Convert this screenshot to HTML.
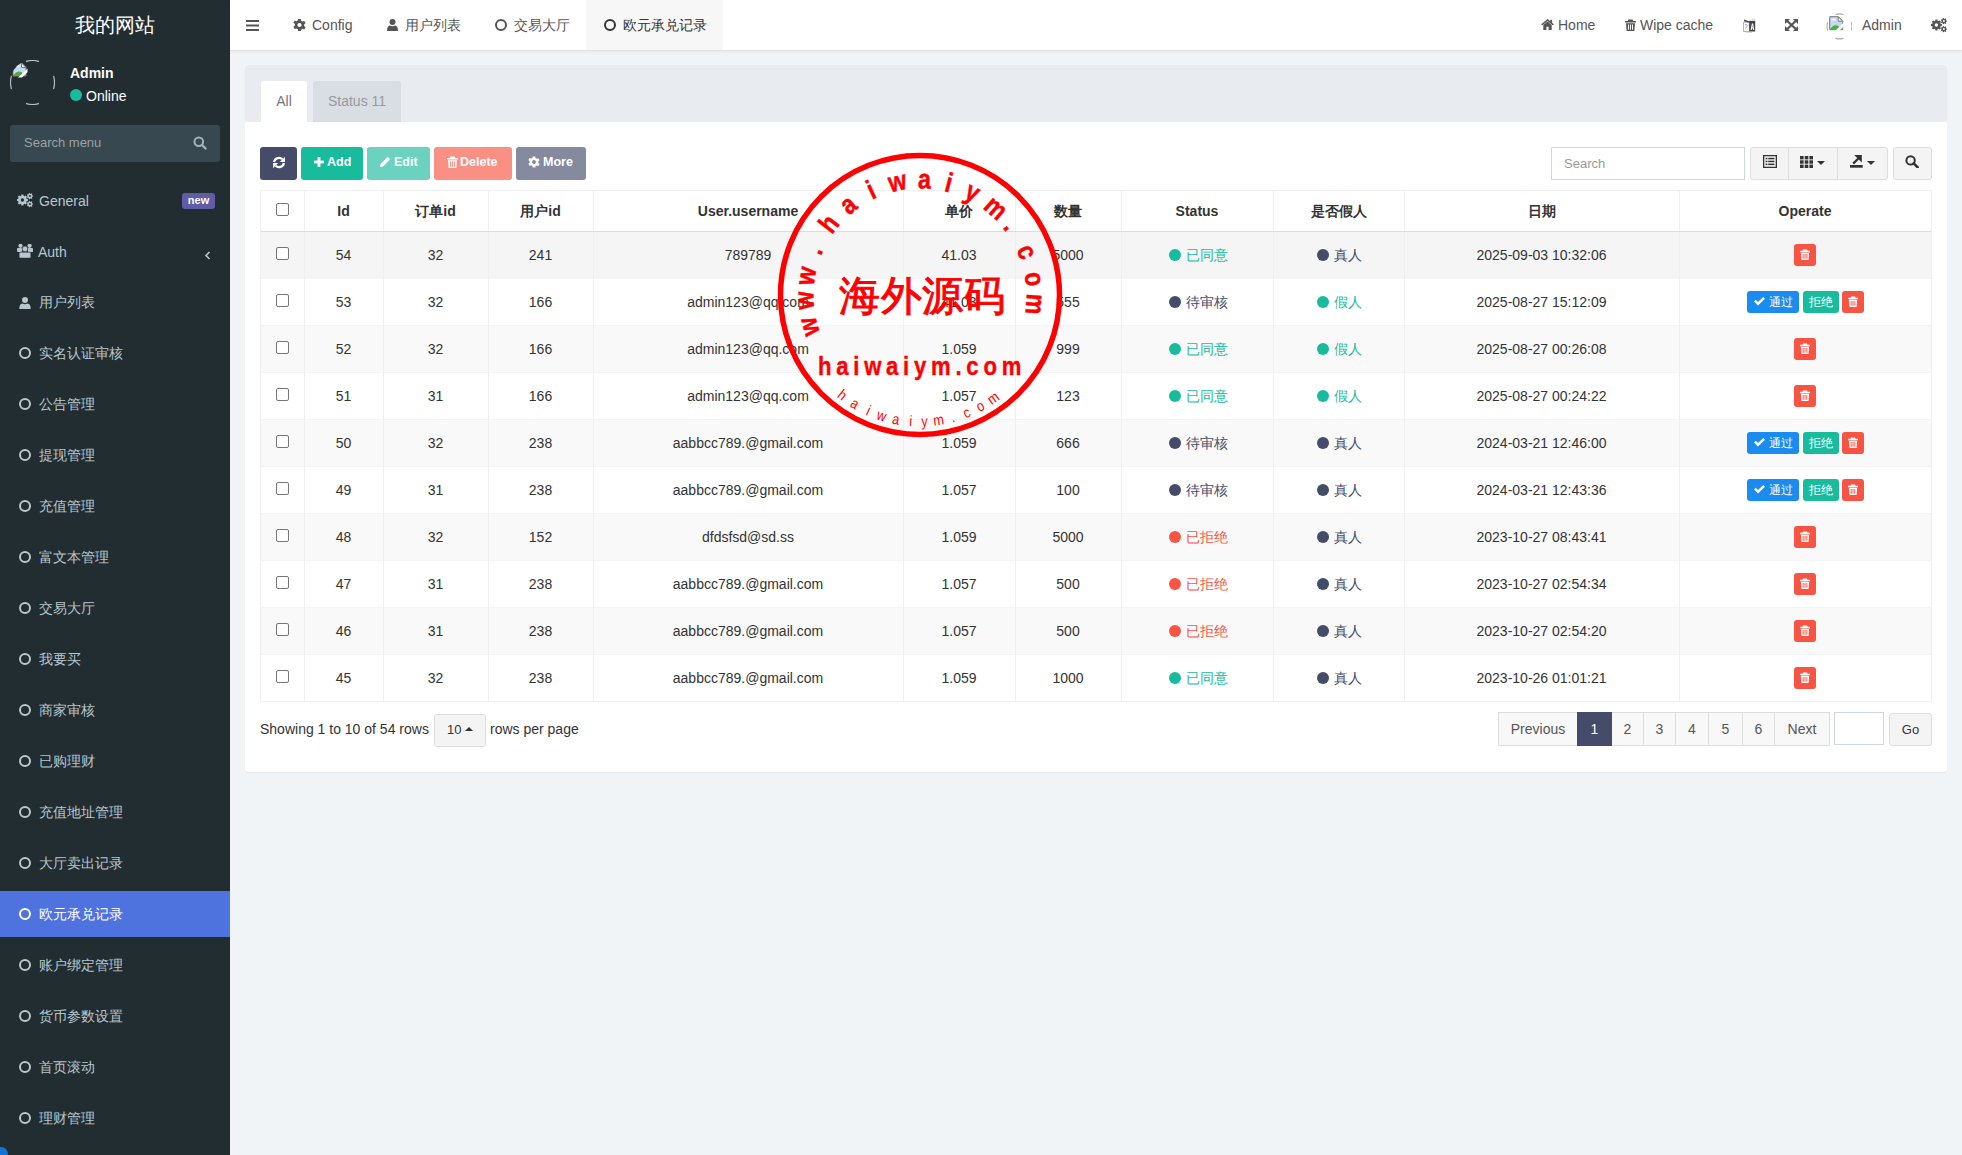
<!DOCTYPE html><html><head><meta charset="utf-8"><style>
*{box-sizing:border-box;margin:0;padding:0}
html,body{width:1962px;height:1155px;overflow:hidden}
body{font-family:"Liberation Sans",sans-serif;font-size:13px;color:#333;background:#f1f4f6;position:relative}
.a{position:absolute}
svg{display:block;position:absolute}
#sb{position:absolute;left:0;top:0;width:230px;height:1155px;background:#222d32}
#logo{position:absolute;left:0;top:0;width:230px;height:50px;line-height:50px;text-align:center;color:#fff;font-size:20px}
.mi{position:absolute;left:0;width:230px;height:46px;color:#b8c7ce;font-size:14px}
.mi .t{position:absolute;left:39px;top:15px;line-height:17px;white-space:nowrap}
.mi.act{background:#4e73df;color:#fff}
.ci{position:absolute;width:12px;height:12px;border:2px solid currentColor;border-radius:50%}
#hd{position:absolute;left:230px;top:0;width:1732px;height:51px;background:#fff;border-bottom:1px solid #dde1e4;box-shadow:0 1px 3px rgba(0,0,0,.05)}
.nt{position:absolute;top:0;height:50px;line-height:50px;font-size:14px;color:#555;white-space:nowrap}
#box{position:absolute;left:245px;top:65px;width:1702px;height:707px;background:#fff;border-radius:3px;box-shadow:0 1px 1px rgba(0,0,0,.05)}
#tabs{position:absolute;left:0;top:0;width:1702px;height:57px;background:#e8ecf0;border-radius:3px 3px 0 0}
.tab{position:absolute;top:16px;height:41px;line-height:41px;font-size:14px;text-align:center;border-radius:3px 3px 0 0}
.btn{position:absolute;top:82px;height:33px;border-radius:3px;color:#fff;font-size:14px;font-weight:bold;line-height:33px;white-space:nowrap}
table{position:absolute;border-collapse:collapse;table-layout:fixed;font-size:13px}
td,th{border:1px solid #ebeef0;text-align:center;vertical-align:middle;white-space:nowrap;overflow:hidden}
th{height:41px;font-weight:bold;color:#333;border-bottom:2px solid #ddd}
td{height:47px;color:#333}
tr.odd td{background:#f5f5f5}
.dot{display:inline-block;width:12px;height:12px;border-radius:50%;vertical-align:-1px;margin-right:5px}
.ob{display:inline-block;height:22px;line-height:22px;border-radius:3px;color:#fff;font-size:12px;vertical-align:middle}
.pgi{height:34px;line-height:32px;border:1px solid #ddd;background:#f8f8f8;color:#555;font-size:14px;text-align:center}
.cb{position:absolute;width:13px;height:13px;border:1px solid #767676;border-radius:2px;background:#fff}
.th{font-weight:bold;text-align:center;line-height:17px;font-size:14px;color:#333;white-space:nowrap}
.td{text-align:center;line-height:17px;font-size:14px;color:#333;white-space:nowrap}
</style></head><body><div id="sb"><div id="logo">我的网站</div><svg style="left:10px;top:60px" width="45" height="45" viewBox="0 0 45 45"><defs><clipPath id="cav"><circle cx="22.5" cy="22.5" r="22.5"/></clipPath></defs><g clip-path="url(#cav)"><g transform="translate(1.5,1.5)"><path d="M1.5 1.5 H10 L14.5 6 V14.5 H1.5 Z" fill="#c6d8f6" stroke="#777" stroke-width="1"/><path d="M3 5 Q3.5 3.3 5 3.6 Q6 2.6 7 3.6 Q8 3.8 8 5 Z" fill="#fff"/><path d="M10 1.5 V6 H14.5 Z" fill="#fff" stroke="#777" stroke-width="1" stroke-linejoin="round"/><path d="M1.5 14.5 Q5 8.5 10 10.5 L12 14.5 Z" fill="#4caf37"/><path d="M11 14.5 Q13 12 14.5 14 L14.5 14.5 Z" fill="#4caf37"/><path d="M6.5 16 L16 7 L16 10.8 L10.5 16 Z" fill="#fff"/></g></g><path d="M16.44 1.35 A22.00 22.00 0 0 1 28.56 1.35" stroke="#b5bcc0" stroke-width="1.2" fill="none" stroke-linecap="round"/><path d="M28.56 43.65 A22.00 22.00 0 0 1 16.44 43.65" stroke="#b5bcc0" stroke-width="1.2" fill="none" stroke-linecap="round"/><path d="M1.35 28.56 A22.00 22.00 0 0 1 1.35 16.44" stroke="#b5bcc0" stroke-width="1.2" fill="none" stroke-linecap="round"/><path d="M43.65 16.44 A22.00 22.00 0 0 1 43.65 28.56" stroke="#b5bcc0" stroke-width="1.2" fill="none" stroke-linecap="round"/></svg><div class="a" style="left:70px;top:65px;font-size:14px;font-weight:bold;color:#fff;line-height:17px">Admin</div><div class="a" style="left:70px;top:89px;width:12px;height:12px;border-radius:50%;background:#18bc9c"></div><div class="a" style="left:86px;top:88px;font-size:14px;color:#fff;line-height:17px">Online</div><div class="a" style="left:10px;top:125px;width:210px;height:37px;background:#374850;border-radius:3px"></div><div class="a" style="left:24px;top:135px;font-size:13px;color:#9aa3a8;line-height:16px">Search menu</div><svg style="left:193px;top:136px" width="14" height="14" viewBox="0 0 14 14"><circle cx="5.8" cy="5.8" r="4.3" stroke="#a9b1b5" stroke-width="2" fill="none"/><path d="M9 9 L12.5 12.5" stroke="#a9b1b5" stroke-width="2.4" stroke-linecap="round"/></svg><div class="mi" style="top:177px"><svg style="left:17px;top:16px" width="16" height="15" viewBox="0 0 16 15"><g fill="currentColor"><path fill-rule="evenodd" d="M9.54 5.85 L10.91 6.02 L10.91 7.98 L9.54 8.15 L9.14 9.12 L9.99 10.20 L8.60 11.59 L7.52 10.74 L6.55 11.14 L6.38 12.51 L4.42 12.51 L4.25 11.14 L3.28 10.74 L2.20 11.59 L0.81 10.20 L1.66 9.12 L1.26 8.15 L-0.11 7.98 L-0.11 6.02 L1.26 5.85 L1.66 4.88 L0.81 3.80 L2.20 2.41 L3.28 3.26 L4.25 2.86 L4.42 1.49 L6.38 1.49 L6.55 2.86 L7.52 3.26 L8.60 2.41 L9.99 3.80 L9.14 4.88 Z M3.70 7.00 a1.70 1.70 0 1 0 3.40 0 a1.70 1.70 0 1 0 -3.40 0 Z"/><path fill-rule="evenodd" d="M15.09 2.40 L16.03 2.46 L16.03 3.74 L15.09 3.80 L14.81 4.38 L15.36 5.15 L14.35 5.95 L13.72 5.25 L13.10 5.39 L12.83 6.30 L11.58 6.01 L11.73 5.08 L11.23 4.68 L10.35 5.04 L9.80 3.88 L10.62 3.42 L10.62 2.78 L9.80 2.32 L10.35 1.16 L11.23 1.52 L11.73 1.12 L11.58 0.19 L12.83 -0.10 L13.10 0.81 L13.72 0.95 L14.35 0.25 L15.36 1.05 L14.81 1.82 Z M11.90 3.10 a1.00 1.00 0 1 0 2.00 0 a1.00 1.00 0 1 0 -2.00 0 Z"/><path fill-rule="evenodd" d="M15.09 10.40 L16.03 10.46 L16.03 11.74 L15.09 11.80 L14.81 12.38 L15.36 13.15 L14.35 13.95 L13.72 13.25 L13.10 13.39 L12.83 14.30 L11.58 14.01 L11.73 13.08 L11.23 12.68 L10.35 13.04 L9.80 11.88 L10.62 11.42 L10.62 10.78 L9.80 10.32 L10.35 9.16 L11.23 9.52 L11.73 9.12 L11.58 8.19 L12.83 7.90 L13.10 8.81 L13.72 8.95 L14.35 8.25 L15.36 9.05 L14.81 9.82 Z M11.90 11.10 a1.00 1.00 0 1 0 2.00 0 a1.00 1.00 0 1 0 -2.00 0 Z"/></g></svg><div class="a" style="left:182px;top:16px;width:33px;height:16px;border-radius:3px;background:#605ca8;color:#fff;font-size:11px;font-weight:bold;line-height:14.5px;text-align:center">new</div><div class="t" style="left:39px;top:16px">General</div></div><div class="mi" style="top:228px"><svg style="left:17px;top:66px" width="16" height="15" viewBox="0 0 16 15" fill="currentColor" transform="translate(0,0)"></svg><svg style="left:17px;top:16px" width="16" height="15" viewBox="0 0 16 15" fill="currentColor"><circle cx="3.5" cy="1.8" r="2.1"/><circle cx="12.6" cy="1.8" r="2.1"/><rect x="0" y="4.1" width="5.2" height="4" rx="1"/><rect x="10.9" y="4.1" width="5.2" height="4" rx="1"/><circle cx="8" cy="4.9" r="2.8" stroke="#222d32" stroke-width=".6"/><rect x="2.2" y="8.2" width="11.6" height="5.9" rx="1.2" stroke="#222d32" stroke-width=".5"/></svg><div class="t" style="left:38px;top:16px">Auth</div><svg style="left:204px;top:23px" width="7" height="9" viewBox="0 0 7 9"><path d="M5.5 1 L2 4.5 L5.5 8" stroke="currentColor" stroke-width="1.6" fill="none"/></svg></div><div class="mi" style="top:279px"><svg style="left:19px;top:119px" width="12" height="12"></svg><svg style="left:19px;top:18px" width="12" height="12" viewBox="0 0 12 12" fill="currentColor"><circle cx="6" cy="3" r="3"/><path d="M0.3 12 Q0.3 6.6 3.3 6.4 Q6 8 8.7 6.4 Q11.7 6.6 11.7 12 Z"/></svg><div class="t">用户列表</div></div><div class="mi" style="top:330px"><div class="ci" style="left:19px;top:17px"></div><div class="t">实名认证审核</div></div><div class="mi" style="top:381px"><div class="ci" style="left:19px;top:17px"></div><div class="t">公告管理</div></div><div class="mi" style="top:432px"><div class="ci" style="left:19px;top:17px"></div><div class="t">提现管理</div></div><div class="mi" style="top:483px"><div class="ci" style="left:19px;top:17px"></div><div class="t">充值管理</div></div><div class="mi" style="top:534px"><div class="ci" style="left:19px;top:17px"></div><div class="t">富文本管理</div></div><div class="mi" style="top:585px"><div class="ci" style="left:19px;top:17px"></div><div class="t">交易大厅</div></div><div class="mi" style="top:636px"><div class="ci" style="left:19px;top:17px"></div><div class="t">我要买</div></div><div class="mi" style="top:687px"><div class="ci" style="left:19px;top:17px"></div><div class="t">商家审核</div></div><div class="mi" style="top:738px"><div class="ci" style="left:19px;top:17px"></div><div class="t">已购理财</div></div><div class="mi" style="top:789px"><div class="ci" style="left:19px;top:17px"></div><div class="t">充值地址管理</div></div><div class="mi" style="top:840px"><div class="ci" style="left:19px;top:17px"></div><div class="t">大厅卖出记录</div></div><div class="mi act" style="top:891px"><div class="ci" style="left:19px;top:17px"></div><div class="t">欧元承兑记录</div></div><div class="mi" style="top:942px"><div class="ci" style="left:19px;top:17px"></div><div class="t">账户绑定管理</div></div><div class="mi" style="top:993px"><div class="ci" style="left:19px;top:17px"></div><div class="t">货币参数设置</div></div><div class="mi" style="top:1044px"><div class="ci" style="left:19px;top:17px"></div><div class="t">首页滚动</div></div><div class="mi" style="top:1095px"><div class="ci" style="left:19px;top:17px"></div><div class="t">理财管理</div></div></div><div id="hd"><svg style="left:16px;top:20px" width="13" height="11" viewBox="0 0 13 11" fill="#555"><rect y="0" width="13" height="2"/><rect y="4.5" width="13" height="2"/><rect y="9" width="13" height="2"/></svg><svg style="left:63px;top:19px" width="13" height="12" viewBox="0 0 13 12" fill="#555"><path fill-rule="evenodd" d="M5.2 0h2.6l.4 1.9c.5.2.9.4 1.3.7l1.8-.7 1.3 2.2-1.5 1.3c.1.5.1 1 0 1.5l1.5 1.3-1.3 2.2-1.8-.7c-.4.3-.8.5-1.3.7L7.8 12H5.2l-.4-1.9c-.5-.2-.9-.4-1.3-.7l-1.8.7L.4 7.9 1.9 6.6c-.1-.5-.1-1 0-1.5L.4 3.8 1.7 1.6l1.8.7c.4-.3.8-.5 1.3-.7z M6.5 3.9a2.1 2.1 0 1 0 .01 0z"/></svg><div class="nt" style="left:82px">Config</div><svg style="left:157px;top:19px" width="11" height="12" viewBox="0 0 11 12" fill="#555"><circle cx="5.5" cy="3" r="3"/><path d="M0 12 Q0 6.6 2.8 6.4 Q5.5 8 8.2 6.4 Q11 6.6 11 12 Z"/></svg><div class="nt" style="left:175px">用户列表</div><div class="ci" style="left:265px;top:19px;color:#555"></div><div class="nt" style="left:284px">交易大厅</div><div class="a" style="left:356px;top:0;width:137px;height:50px;background:#f7f7f7"></div><div class="ci" style="left:374px;top:19px;color:#333"></div><div class="nt" style="left:393px;color:#333">欧元承兑记录</div><svg style="left:1311px;top:19px" width="13" height="11" viewBox="0 0 13 11" fill="#555"><path d="M6.5 0 L13 5.6 L11.6 6.2 L6.5 1.9 L1.4 6.2 L0 5.6 Z"/><path d="M2.3 6 L6.5 2.6 L10.7 6 L10.7 11 L7.6 11 L7.6 7.8 L5.4 7.8 L5.4 11 L2.3 11 Z"/><rect x="9.3" y="0.8" width="1.8" height="3"/></svg><div class="nt" style="left:1328px">Home</div><svg style="left:1395px;top:19px" width="11" height="12" viewBox="0 0 11 12" fill="#555"><path d="M3.3 0.5 H7.7 L8.2 2 H11 V3.5 H0 V2 H2.8 Z"/><path fill-rule="evenodd" d="M1 4.2 H10 L9.4 12 H1.6 Z M3 5.5 V10.8 H4 V5.5 Z M5 5.5 V10.8 H6 V5.5 Z M7 5.5 V10.8 H8 V5.5 Z"/></svg><div class="nt" style="left:1410px">Wipe cache</div><svg style="left:1511px;top:17px" width="16" height="16" viewBox="0 0 16 16"><path d="M2.5 5.3 H8.3 V14.5 H2.5 Z" fill="#fff" stroke="#aaa" stroke-width=".9"/><path d="M3 2.5 L8.5 4.5 L8.5 5.8 L3 4.2 Z" fill="#444"/><path d="M8.2 3.8 H14.2 V14.5 H8.2 Z" fill="#444"/><path d="M9.6 13 L10.9 6.6 L12.1 6.6 L13.3 13 L12.2 13 L11.95 11.4 L10.95 11.4 L10.7 13 Z M11.1 10.3 L11.8 10.3 L11.45 8 Z" fill="#fff"/><path d="M4 8 L6.5 8 M5.2 7 L5.2 8 M4.2 11.5 Q6.5 10 6.2 8" stroke="#8a9bd0" stroke-width=".7" fill="none"/><path d="M5 15.8 H11" stroke="#bbb" stroke-width=".8"/><path d="M11 2.3 H14 V3.6" stroke="#ccc" stroke-width=".8" fill="none"/></svg><svg style="left:1555px;top:19px" width="13" height="12" viewBox="0 0 13 12" fill="#555"><path d="M0 0 H5 L0 5 Z"/><path d="M13 0 H8 L13 5 Z"/><path d="M0 12 H5 L0 7 Z"/><path d="M13 12 H8 L13 7 Z"/><path d="M2 1.8 L11 10.2 M11 1.8 L2 10.2" stroke="#555" stroke-width="2.2"/></svg><svg style="left:1596px;top:13px" width="26" height="27" viewBox="0 0 26 27"><g transform="translate(2.2,2.2)"><path d="M1.5 1.5 H10 L14.5 6 V14.5 H1.5 Z" fill="#c6d8f6" stroke="#777" stroke-width="1"/><path d="M3 5 Q3.5 3.3 5 3.6 Q6 2.6 7 3.6 Q8 3.8 8 5 Z" fill="#fff"/><path d="M10 1.5 V6 H14.5 Z" fill="#fff" stroke="#777" stroke-width="1" stroke-linejoin="round"/><path d="M1.5 14.5 Q5 8.5 10 10.5 L12 14.5 Z" fill="#4caf37"/><path d="M11 14.5 Q13 12 14.5 14 L14.5 14.5 Z" fill="#4caf37"/><path d="M6.5 16 L16 7 L16 10.8 L10.5 16 Z" fill="#fff"/></g><path d="M9.85 1.45 A12.50 12.50 0 0 1 17.15 1.45" stroke="#aaa" stroke-width="1.1" fill="none" stroke-linecap="round"/><path d="M17.15 25.35 A12.50 12.50 0 0 1 9.85 25.35" stroke="#aaa" stroke-width="1.1" fill="none" stroke-linecap="round"/><path d="M1.55 17.05 A12.50 12.50 0 0 1 1.55 9.75" stroke="#aaa" stroke-width="1.1" fill="none" stroke-linecap="round"/><path d="M25.45 9.75 A12.50 12.50 0 0 1 25.45 17.05" stroke="#aaa" stroke-width="1.1" fill="none" stroke-linecap="round"/></svg><div class="nt" style="left:1632px">Admin</div><svg style="left:1701px;top:18px" width="16" height="15" viewBox="0 0 16 15"><g fill="#555"><path fill-rule="evenodd" d="M9.54 5.85 L10.91 6.02 L10.91 7.98 L9.54 8.15 L9.14 9.12 L9.99 10.20 L8.60 11.59 L7.52 10.74 L6.55 11.14 L6.38 12.51 L4.42 12.51 L4.25 11.14 L3.28 10.74 L2.20 11.59 L0.81 10.20 L1.66 9.12 L1.26 8.15 L-0.11 7.98 L-0.11 6.02 L1.26 5.85 L1.66 4.88 L0.81 3.80 L2.20 2.41 L3.28 3.26 L4.25 2.86 L4.42 1.49 L6.38 1.49 L6.55 2.86 L7.52 3.26 L8.60 2.41 L9.99 3.80 L9.14 4.88 Z M3.70 7.00 a1.70 1.70 0 1 0 3.40 0 a1.70 1.70 0 1 0 -3.40 0 Z"/><path fill-rule="evenodd" d="M15.09 2.40 L16.03 2.46 L16.03 3.74 L15.09 3.80 L14.81 4.38 L15.36 5.15 L14.35 5.95 L13.72 5.25 L13.10 5.39 L12.83 6.30 L11.58 6.01 L11.73 5.08 L11.23 4.68 L10.35 5.04 L9.80 3.88 L10.62 3.42 L10.62 2.78 L9.80 2.32 L10.35 1.16 L11.23 1.52 L11.73 1.12 L11.58 0.19 L12.83 -0.10 L13.10 0.81 L13.72 0.95 L14.35 0.25 L15.36 1.05 L14.81 1.82 Z M11.90 3.10 a1.00 1.00 0 1 0 2.00 0 a1.00 1.00 0 1 0 -2.00 0 Z"/><path fill-rule="evenodd" d="M15.09 10.40 L16.03 10.46 L16.03 11.74 L15.09 11.80 L14.81 12.38 L15.36 13.15 L14.35 13.95 L13.72 13.25 L13.10 13.39 L12.83 14.30 L11.58 14.01 L11.73 13.08 L11.23 12.68 L10.35 13.04 L9.80 11.88 L10.62 11.42 L10.62 10.78 L9.80 10.32 L10.35 9.16 L11.23 9.52 L11.73 9.12 L11.58 8.19 L12.83 7.90 L13.10 8.81 L13.72 8.95 L14.35 8.25 L15.36 9.05 L14.81 9.82 Z M11.90 11.10 a1.00 1.00 0 1 0 2.00 0 a1.00 1.00 0 1 0 -2.00 0 Z"/></g></svg></div><div id="box"><div id="tabs"><div class="tab" style="left:16px;width:46px;background:#fff;color:#777">All</div><div class="tab" style="left:68px;width:88px;background:#d8dee4;color:#999">Status 11</div></div></div><div class="a" style="left:260px;top:147px;width:37px;height:33px;border-radius:3px;background:#444c69"></div><svg style="left:272px;top:156px" width="14" height="13" viewBox="0 0 14 13"><g transform="translate(1,0)"><g><path d="M1.1 6 A4.9 4.9 0 0 1 9.4 3.3" stroke="#fff" stroke-width="2.3" fill="none"/><path d="M6.8 5.9 L12 5.9 L12 0.7 Z" fill="#fff"/></g><g transform="rotate(180 6 6.5)"><path d="M1.1 6 A4.9 4.9 0 0 1 9.4 3.3" stroke="#fff" stroke-width="2.3" fill="none"/><path d="M6.8 5.9 L12 5.9 L12 0.7 Z" fill="#fff"/></g></g></svg><div class="a" style="left:301px;top:147px;width:62px;height:33px;border-radius:3px;background:#18bc9c"></div><svg style="left:314px;top:157px" width="10" height="10" viewBox="0 0 10 10" fill="#fff"><rect x="3.6" y="0" width="2.8" height="10"/><rect x="0" y="3.6" width="10" height="2.8"/></svg><div class="a" style="left:327px;top:155px;font-size:12.5px;font-weight:bold;color:#fff;line-height:15px">Add</div><div class="a" style="left:367px;top:147px;width:63px;height:33px;border-radius:3px;background:#6ad2be"></div><svg style="left:380px;top:156px" width="11" height="11" viewBox="0 0 11 11" fill="#fff"><path d="M0 11 L0.6 8 L7.8 0.8 L10.2 3.2 L3 10.4 Z"/></svg><div class="a" style="left:394px;top:155px;font-size:12.5px;font-weight:bold;color:#fff;line-height:15px">Edit</div><div class="a" style="left:434px;top:147px;width:78px;height:33px;border-radius:3px;background:#fa9084"></div><svg style="left:447px;top:156px" width="11" height="12" viewBox="0 0 11 12" fill="#fff"><path d="M3.3 0.5 H7.7 L8.2 2 H11 V3.5 H0 V2 H2.8 Z"/><path fill-rule="evenodd" d="M1 4.2 H10 L9.4 12 H1.6 Z M3 5.5 V10.8 H4 V5.5 Z M5 5.5 V10.8 H6 V5.5 Z M7 5.5 V10.8 H8 V5.5 Z"/></svg><div class="a" style="left:460px;top:155px;font-size:12.5px;font-weight:bold;color:#fff;line-height:15px">Delete</div><div class="a" style="left:516px;top:147px;width:70px;height:33px;border-radius:3px;background:#858a9e"></div><svg style="left:528px;top:156px" width="12" height="12" viewBox="0 0 13 12" fill="#fff"><path fill-rule="evenodd" d="M5.2 0h2.6l.4 1.9c.5.2.9.4 1.3.7l1.8-.7 1.3 2.2-1.5 1.3c.1.5.1 1 0 1.5l1.5 1.3-1.3 2.2-1.8-.7c-.4.3-.8.5-1.3.7L7.8 12H5.2l-.4-1.9c-.5-.2-.9-.4-1.3-.7l-1.8.7L.4 7.9 1.9 6.6c-.1-.5-.1-1 0-1.5L.4 3.8 1.7 1.6l1.8.7c.4-.3.8-.5 1.3-.7z M6.5 3.9a2.1 2.1 0 1 0 .01 0z"/></svg><div class="a" style="left:543px;top:155px;font-size:12.5px;font-weight:bold;color:#fff;line-height:15px">More</div><div class="a" style="left:1551px;top:147px;width:194px;height:33px;border:1px solid #d2d6de;background:#fff"></div><div class="a" style="left:1564px;top:156px;font-size:13px;color:#999;line-height:15px">Search</div><div class="a" style="left:1750px;top:147px;width:138px;height:33px;border:1px solid #ddd;background:#f4f4f4;border-radius:3px"></div><div class="a" style="left:1788px;top:147px;width:1px;height:33px;background:#ddd"></div><div class="a" style="left:1837px;top:147px;width:1px;height:33px;background:#ddd"></div><div class="a" style="left:1893px;top:147px;width:39px;height:33px;border:1px solid #ddd;background:#f4f4f4;border-radius:3px"></div><svg style="left:1763px;top:155px" width="14" height="13" viewBox="0 0 14 13" fill="#333"><path fill-rule="evenodd" d="M0 0 H14 V13 H0 Z M1.3 1.3 V11.7 H12.7 V1.3 Z"/><rect x="2.6" y="2.8" width="1.8" height="1.5"/><rect x="5.2" y="2.8" width="6.2" height="1.5"/><rect x="2.6" y="5.7" width="1.8" height="1.5"/><rect x="5.2" y="5.7" width="6.2" height="1.5"/><rect x="2.6" y="8.6" width="1.8" height="1.5"/><rect x="5.2" y="8.6" width="6.2" height="1.5"/></svg><svg style="left:1800px;top:156px" width="13" height="12" viewBox="0 0 13 12" fill="#333"><rect x="0" y="0" width="3.6" height="3.4"/><rect x="4.7" y="0" width="3.6" height="3.4"/><rect x="9.4" y="0" width="3.6" height="3.4"/><rect x="0" y="4.3" width="3.6" height="3.4"/><rect x="4.7" y="4.3" width="3.6" height="3.4"/><rect x="9.4" y="4.3" width="3.6" height="3.4"/><rect x="0" y="8.6" width="3.6" height="3.4"/><rect x="4.7" y="8.6" width="3.6" height="3.4"/><rect x="9.4" y="8.6" width="3.6" height="3.4"/></svg><svg style="left:1817px;top:161px" width="8" height="4" viewBox="0 0 8 4" fill="#333"><path d="M0 0 H8 L4 4 Z"/></svg><svg style="left:1850px;top:154px" width="14" height="14" viewBox="0 0 14 14" fill="#333"><path d="M4.2 1 L11.8 1 L11.8 8.4 Z"/><path d="M3.2 9.6 L8.6 4.2" stroke="#333" stroke-width="2.3"/><rect x="0" y="11" width="12.7" height="2.7"/></svg><svg style="left:1867px;top:161px" width="8" height="4" viewBox="0 0 8 4" fill="#333"><path d="M0 0 H8 L4 4 Z"/></svg><svg style="left:1905px;top:155px" width="15" height="13" viewBox="0 0 15 13"><circle cx="5.6" cy="5.4" r="4.2" stroke="#333" stroke-width="2" fill="none"/><path d="M8.6 8.4 L12.6 12.2" stroke="#333" stroke-width="2.6" stroke-linecap="round"/></svg><div class="a" style="left:260px;top:190px;width:1672px;height:512px;background:#fff;border:1px solid #f0f0f0"></div><div class="a" style="left:261px;top:231px;width:1670px;height:47px;background:#f5f5f5;border-top:1px solid #f4f4f4"></div><div class="a" style="left:261px;top:278px;width:1670px;height:47px;background:#fff;border-top:1px solid #f4f4f4"></div><div class="a" style="left:261px;top:325px;width:1670px;height:47px;background:#f9f9f9;border-top:1px solid #f4f4f4"></div><div class="a" style="left:261px;top:372px;width:1670px;height:47px;background:#fff;border-top:1px solid #f4f4f4"></div><div class="a" style="left:261px;top:419px;width:1670px;height:47px;background:#f9f9f9;border-top:1px solid #f4f4f4"></div><div class="a" style="left:261px;top:466px;width:1670px;height:47px;background:#fff;border-top:1px solid #f4f4f4"></div><div class="a" style="left:261px;top:513px;width:1670px;height:47px;background:#f9f9f9;border-top:1px solid #f4f4f4"></div><div class="a" style="left:261px;top:560px;width:1670px;height:47px;background:#fff;border-top:1px solid #f4f4f4"></div><div class="a" style="left:261px;top:607px;width:1670px;height:47px;background:#f9f9f9;border-top:1px solid #f4f4f4"></div><div class="a" style="left:261px;top:654px;width:1670px;height:47px;background:#fff;border-top:1px solid #f4f4f4"></div><div class="a" style="left:304px;top:191px;width:1px;height:510px;background:#f0f0f0"></div><div class="a" style="left:383px;top:191px;width:1px;height:510px;background:#f0f0f0"></div><div class="a" style="left:488px;top:191px;width:1px;height:510px;background:#f0f0f0"></div><div class="a" style="left:593px;top:191px;width:1px;height:510px;background:#f0f0f0"></div><div class="a" style="left:903px;top:191px;width:1px;height:510px;background:#f0f0f0"></div><div class="a" style="left:1015px;top:191px;width:1px;height:510px;background:#f0f0f0"></div><div class="a" style="left:1121px;top:191px;width:1px;height:510px;background:#f0f0f0"></div><div class="a" style="left:1273px;top:191px;width:1px;height:510px;background:#f0f0f0"></div><div class="a" style="left:1404px;top:191px;width:1px;height:510px;background:#f0f0f0"></div><div class="a" style="left:1679px;top:191px;width:1px;height:510px;background:#f0f0f0"></div><div class="a" style="left:261px;top:231px;width:1670px;height:1px;background:#dcdcdc"></div><div class="a cb" style="left:276px;top:203px"></div><div class="a th" style="left:304px;width:79px;top:203px">Id</div><div class="a th" style="left:383px;width:105px;top:203px">订单id</div><div class="a th" style="left:488px;width:105px;top:203px">用户id</div><div class="a th" style="left:593px;width:310px;top:203px">User.username</div><div class="a th" style="left:903px;width:112px;top:203px">单价</div><div class="a th" style="left:1015px;width:106px;top:203px">数量</div><div class="a th" style="left:1121px;width:152px;top:203px">Status</div><div class="a th" style="left:1273px;width:131px;top:203px">是否假人</div><div class="a th" style="left:1404px;width:275px;top:203px">日期</div><div class="a th" style="left:1679px;width:252px;top:203px">Operate</div><div class="a cb" style="left:276px;top:247px"></div><div class="a td" style="left:304px;width:79px;top:247px">54</div><div class="a td" style="left:383px;width:105px;top:247px">32</div><div class="a td" style="left:488px;width:105px;top:247px">241</div><div class="a td" style="left:593px;width:310px;top:247px">789789</div><div class="a td" style="left:903px;width:112px;top:247px">41.03</div><div class="a td" style="left:1015px;width:106px;top:247px">5000</div><div class="a td" style="left:1121px;width:152px;top:247px"><span style="position:relative;left:1px"><span class="dot" style="background:#18bc9c"></span><span style="color:#18bc9c">已同意</span></span></div><div class="a td" style="left:1273px;width:131px;top:247px"><span style="position:relative;left:1px"><span class="dot" style="background:#444c69"></span><span style="color:#444c69">真人</span></span></div><div class="a td" style="left:1404px;width:275px;top:247px">2025-09-03 10:32:06</div><div class="a ob" style="left:1794px;top:244px;width:22px;background:#f75444"><svg style="left:6px;top:5px" width="10" height="11" viewBox="0 0 11 12" fill="#fff"><path d="M3.3 0.5 H7.7 L8.2 2 H11 V3.5 H0 V2 H2.8 Z"/><path fill-rule="evenodd" d="M1 4.2 H10 L9.4 12 H1.6 Z M3 5.5 V10.8 H4 V5.5 Z M5 5.5 V10.8 H6 V5.5 Z M7 5.5 V10.8 H8 V5.5 Z"/></svg></div><div class="a cb" style="left:276px;top:294px"></div><div class="a td" style="left:304px;width:79px;top:294px">53</div><div class="a td" style="left:383px;width:105px;top:294px">32</div><div class="a td" style="left:488px;width:105px;top:294px">166</div><div class="a td" style="left:593px;width:310px;top:294px">admin123@qq.com</div><div class="a td" style="left:903px;width:112px;top:294px">41.03</div><div class="a td" style="left:1015px;width:106px;top:294px">555</div><div class="a td" style="left:1121px;width:152px;top:294px"><span style="position:relative;left:1px"><span class="dot" style="background:#444c69"></span><span style="color:#444c69">待审核</span></span></div><div class="a td" style="left:1273px;width:131px;top:294px"><span style="position:relative;left:1px"><span class="dot" style="background:#18bc9c"></span><span style="color:#18bc9c">假人</span></span></div><div class="a td" style="left:1404px;width:275px;top:294px">2025-08-27 15:12:09</div><div class="a ob" style="left:1747px;top:291px;width:52px;background:#1a8cf0"><svg style="left:7px;top:6px" width="11" height="9" viewBox="0 0 11 9" fill="#fff"><path d="M0 4.6 L1.8 2.8 L4 5 L9.2 0 L11 1.8 L4 8.6 Z"/></svg><span style="position:absolute;left:22px;top:0">通过</span></div><div class="a ob" style="left:1803px;top:291px;width:36px;background:#18bc9c;text-align:center">拒绝</div><div class="a ob" style="left:1842px;top:291px;width:22px;background:#f75444"><svg style="left:6px;top:5px" width="10" height="11" viewBox="0 0 11 12" fill="#fff"><path d="M3.3 0.5 H7.7 L8.2 2 H11 V3.5 H0 V2 H2.8 Z"/><path fill-rule="evenodd" d="M1 4.2 H10 L9.4 12 H1.6 Z M3 5.5 V10.8 H4 V5.5 Z M5 5.5 V10.8 H6 V5.5 Z M7 5.5 V10.8 H8 V5.5 Z"/></svg></div><div class="a cb" style="left:276px;top:341px"></div><div class="a td" style="left:304px;width:79px;top:341px">52</div><div class="a td" style="left:383px;width:105px;top:341px">32</div><div class="a td" style="left:488px;width:105px;top:341px">166</div><div class="a td" style="left:593px;width:310px;top:341px">admin123@qq.com</div><div class="a td" style="left:903px;width:112px;top:341px">1.059</div><div class="a td" style="left:1015px;width:106px;top:341px">999</div><div class="a td" style="left:1121px;width:152px;top:341px"><span style="position:relative;left:1px"><span class="dot" style="background:#18bc9c"></span><span style="color:#18bc9c">已同意</span></span></div><div class="a td" style="left:1273px;width:131px;top:341px"><span style="position:relative;left:1px"><span class="dot" style="background:#18bc9c"></span><span style="color:#18bc9c">假人</span></span></div><div class="a td" style="left:1404px;width:275px;top:341px">2025-08-27 00:26:08</div><div class="a ob" style="left:1794px;top:338px;width:22px;background:#f75444"><svg style="left:6px;top:5px" width="10" height="11" viewBox="0 0 11 12" fill="#fff"><path d="M3.3 0.5 H7.7 L8.2 2 H11 V3.5 H0 V2 H2.8 Z"/><path fill-rule="evenodd" d="M1 4.2 H10 L9.4 12 H1.6 Z M3 5.5 V10.8 H4 V5.5 Z M5 5.5 V10.8 H6 V5.5 Z M7 5.5 V10.8 H8 V5.5 Z"/></svg></div><div class="a cb" style="left:276px;top:388px"></div><div class="a td" style="left:304px;width:79px;top:388px">51</div><div class="a td" style="left:383px;width:105px;top:388px">31</div><div class="a td" style="left:488px;width:105px;top:388px">166</div><div class="a td" style="left:593px;width:310px;top:388px">admin123@qq.com</div><div class="a td" style="left:903px;width:112px;top:388px">1.057</div><div class="a td" style="left:1015px;width:106px;top:388px">123</div><div class="a td" style="left:1121px;width:152px;top:388px"><span style="position:relative;left:1px"><span class="dot" style="background:#18bc9c"></span><span style="color:#18bc9c">已同意</span></span></div><div class="a td" style="left:1273px;width:131px;top:388px"><span style="position:relative;left:1px"><span class="dot" style="background:#18bc9c"></span><span style="color:#18bc9c">假人</span></span></div><div class="a td" style="left:1404px;width:275px;top:388px">2025-08-27 00:24:22</div><div class="a ob" style="left:1794px;top:385px;width:22px;background:#f75444"><svg style="left:6px;top:5px" width="10" height="11" viewBox="0 0 11 12" fill="#fff"><path d="M3.3 0.5 H7.7 L8.2 2 H11 V3.5 H0 V2 H2.8 Z"/><path fill-rule="evenodd" d="M1 4.2 H10 L9.4 12 H1.6 Z M3 5.5 V10.8 H4 V5.5 Z M5 5.5 V10.8 H6 V5.5 Z M7 5.5 V10.8 H8 V5.5 Z"/></svg></div><div class="a cb" style="left:276px;top:435px"></div><div class="a td" style="left:304px;width:79px;top:435px">50</div><div class="a td" style="left:383px;width:105px;top:435px">32</div><div class="a td" style="left:488px;width:105px;top:435px">238</div><div class="a td" style="left:593px;width:310px;top:435px">aabbcc789.@gmail.com</div><div class="a td" style="left:903px;width:112px;top:435px">1.059</div><div class="a td" style="left:1015px;width:106px;top:435px">666</div><div class="a td" style="left:1121px;width:152px;top:435px"><span style="position:relative;left:1px"><span class="dot" style="background:#444c69"></span><span style="color:#444c69">待审核</span></span></div><div class="a td" style="left:1273px;width:131px;top:435px"><span style="position:relative;left:1px"><span class="dot" style="background:#444c69"></span><span style="color:#444c69">真人</span></span></div><div class="a td" style="left:1404px;width:275px;top:435px">2024-03-21 12:46:00</div><div class="a ob" style="left:1747px;top:432px;width:52px;background:#1a8cf0"><svg style="left:7px;top:6px" width="11" height="9" viewBox="0 0 11 9" fill="#fff"><path d="M0 4.6 L1.8 2.8 L4 5 L9.2 0 L11 1.8 L4 8.6 Z"/></svg><span style="position:absolute;left:22px;top:0">通过</span></div><div class="a ob" style="left:1803px;top:432px;width:36px;background:#18bc9c;text-align:center">拒绝</div><div class="a ob" style="left:1842px;top:432px;width:22px;background:#f75444"><svg style="left:6px;top:5px" width="10" height="11" viewBox="0 0 11 12" fill="#fff"><path d="M3.3 0.5 H7.7 L8.2 2 H11 V3.5 H0 V2 H2.8 Z"/><path fill-rule="evenodd" d="M1 4.2 H10 L9.4 12 H1.6 Z M3 5.5 V10.8 H4 V5.5 Z M5 5.5 V10.8 H6 V5.5 Z M7 5.5 V10.8 H8 V5.5 Z"/></svg></div><div class="a cb" style="left:276px;top:482px"></div><div class="a td" style="left:304px;width:79px;top:482px">49</div><div class="a td" style="left:383px;width:105px;top:482px">31</div><div class="a td" style="left:488px;width:105px;top:482px">238</div><div class="a td" style="left:593px;width:310px;top:482px">aabbcc789.@gmail.com</div><div class="a td" style="left:903px;width:112px;top:482px">1.057</div><div class="a td" style="left:1015px;width:106px;top:482px">100</div><div class="a td" style="left:1121px;width:152px;top:482px"><span style="position:relative;left:1px"><span class="dot" style="background:#444c69"></span><span style="color:#444c69">待审核</span></span></div><div class="a td" style="left:1273px;width:131px;top:482px"><span style="position:relative;left:1px"><span class="dot" style="background:#444c69"></span><span style="color:#444c69">真人</span></span></div><div class="a td" style="left:1404px;width:275px;top:482px">2024-03-21 12:43:36</div><div class="a ob" style="left:1747px;top:479px;width:52px;background:#1a8cf0"><svg style="left:7px;top:6px" width="11" height="9" viewBox="0 0 11 9" fill="#fff"><path d="M0 4.6 L1.8 2.8 L4 5 L9.2 0 L11 1.8 L4 8.6 Z"/></svg><span style="position:absolute;left:22px;top:0">通过</span></div><div class="a ob" style="left:1803px;top:479px;width:36px;background:#18bc9c;text-align:center">拒绝</div><div class="a ob" style="left:1842px;top:479px;width:22px;background:#f75444"><svg style="left:6px;top:5px" width="10" height="11" viewBox="0 0 11 12" fill="#fff"><path d="M3.3 0.5 H7.7 L8.2 2 H11 V3.5 H0 V2 H2.8 Z"/><path fill-rule="evenodd" d="M1 4.2 H10 L9.4 12 H1.6 Z M3 5.5 V10.8 H4 V5.5 Z M5 5.5 V10.8 H6 V5.5 Z M7 5.5 V10.8 H8 V5.5 Z"/></svg></div><div class="a cb" style="left:276px;top:529px"></div><div class="a td" style="left:304px;width:79px;top:529px">48</div><div class="a td" style="left:383px;width:105px;top:529px">32</div><div class="a td" style="left:488px;width:105px;top:529px">152</div><div class="a td" style="left:593px;width:310px;top:529px">dfdsfsd@sd.ss</div><div class="a td" style="left:903px;width:112px;top:529px">1.059</div><div class="a td" style="left:1015px;width:106px;top:529px">5000</div><div class="a td" style="left:1121px;width:152px;top:529px"><span style="position:relative;left:1px"><span class="dot" style="background:#f75444"></span><span style="color:#f75444">已拒绝</span></span></div><div class="a td" style="left:1273px;width:131px;top:529px"><span style="position:relative;left:1px"><span class="dot" style="background:#444c69"></span><span style="color:#444c69">真人</span></span></div><div class="a td" style="left:1404px;width:275px;top:529px">2023-10-27 08:43:41</div><div class="a ob" style="left:1794px;top:526px;width:22px;background:#f75444"><svg style="left:6px;top:5px" width="10" height="11" viewBox="0 0 11 12" fill="#fff"><path d="M3.3 0.5 H7.7 L8.2 2 H11 V3.5 H0 V2 H2.8 Z"/><path fill-rule="evenodd" d="M1 4.2 H10 L9.4 12 H1.6 Z M3 5.5 V10.8 H4 V5.5 Z M5 5.5 V10.8 H6 V5.5 Z M7 5.5 V10.8 H8 V5.5 Z"/></svg></div><div class="a cb" style="left:276px;top:576px"></div><div class="a td" style="left:304px;width:79px;top:576px">47</div><div class="a td" style="left:383px;width:105px;top:576px">31</div><div class="a td" style="left:488px;width:105px;top:576px">238</div><div class="a td" style="left:593px;width:310px;top:576px">aabbcc789.@gmail.com</div><div class="a td" style="left:903px;width:112px;top:576px">1.057</div><div class="a td" style="left:1015px;width:106px;top:576px">500</div><div class="a td" style="left:1121px;width:152px;top:576px"><span style="position:relative;left:1px"><span class="dot" style="background:#f75444"></span><span style="color:#f75444">已拒绝</span></span></div><div class="a td" style="left:1273px;width:131px;top:576px"><span style="position:relative;left:1px"><span class="dot" style="background:#444c69"></span><span style="color:#444c69">真人</span></span></div><div class="a td" style="left:1404px;width:275px;top:576px">2023-10-27 02:54:34</div><div class="a ob" style="left:1794px;top:573px;width:22px;background:#f75444"><svg style="left:6px;top:5px" width="10" height="11" viewBox="0 0 11 12" fill="#fff"><path d="M3.3 0.5 H7.7 L8.2 2 H11 V3.5 H0 V2 H2.8 Z"/><path fill-rule="evenodd" d="M1 4.2 H10 L9.4 12 H1.6 Z M3 5.5 V10.8 H4 V5.5 Z M5 5.5 V10.8 H6 V5.5 Z M7 5.5 V10.8 H8 V5.5 Z"/></svg></div><div class="a cb" style="left:276px;top:623px"></div><div class="a td" style="left:304px;width:79px;top:623px">46</div><div class="a td" style="left:383px;width:105px;top:623px">31</div><div class="a td" style="left:488px;width:105px;top:623px">238</div><div class="a td" style="left:593px;width:310px;top:623px">aabbcc789.@gmail.com</div><div class="a td" style="left:903px;width:112px;top:623px">1.057</div><div class="a td" style="left:1015px;width:106px;top:623px">500</div><div class="a td" style="left:1121px;width:152px;top:623px"><span style="position:relative;left:1px"><span class="dot" style="background:#f75444"></span><span style="color:#f75444">已拒绝</span></span></div><div class="a td" style="left:1273px;width:131px;top:623px"><span style="position:relative;left:1px"><span class="dot" style="background:#444c69"></span><span style="color:#444c69">真人</span></span></div><div class="a td" style="left:1404px;width:275px;top:623px">2023-10-27 02:54:20</div><div class="a ob" style="left:1794px;top:620px;width:22px;background:#f75444"><svg style="left:6px;top:5px" width="10" height="11" viewBox="0 0 11 12" fill="#fff"><path d="M3.3 0.5 H7.7 L8.2 2 H11 V3.5 H0 V2 H2.8 Z"/><path fill-rule="evenodd" d="M1 4.2 H10 L9.4 12 H1.6 Z M3 5.5 V10.8 H4 V5.5 Z M5 5.5 V10.8 H6 V5.5 Z M7 5.5 V10.8 H8 V5.5 Z"/></svg></div><div class="a cb" style="left:276px;top:670px"></div><div class="a td" style="left:304px;width:79px;top:670px">45</div><div class="a td" style="left:383px;width:105px;top:670px">32</div><div class="a td" style="left:488px;width:105px;top:670px">238</div><div class="a td" style="left:593px;width:310px;top:670px">aabbcc789.@gmail.com</div><div class="a td" style="left:903px;width:112px;top:670px">1.059</div><div class="a td" style="left:1015px;width:106px;top:670px">1000</div><div class="a td" style="left:1121px;width:152px;top:670px"><span style="position:relative;left:1px"><span class="dot" style="background:#18bc9c"></span><span style="color:#18bc9c">已同意</span></span></div><div class="a td" style="left:1273px;width:131px;top:670px"><span style="position:relative;left:1px"><span class="dot" style="background:#444c69"></span><span style="color:#444c69">真人</span></span></div><div class="a td" style="left:1404px;width:275px;top:670px">2023-10-26 01:01:21</div><div class="a ob" style="left:1794px;top:667px;width:22px;background:#f75444"><svg style="left:6px;top:5px" width="10" height="11" viewBox="0 0 11 12" fill="#fff"><path d="M3.3 0.5 H7.7 L8.2 2 H11 V3.5 H0 V2 H2.8 Z"/><path fill-rule="evenodd" d="M1 4.2 H10 L9.4 12 H1.6 Z M3 5.5 V10.8 H4 V5.5 Z M5 5.5 V10.8 H6 V5.5 Z M7 5.5 V10.8 H8 V5.5 Z"/></svg></div><div class="a" style="left:260px;top:721px;font-size:14px;color:#333;line-height:16px">Showing 1 to 10 of 54 rows</div><div class="a" style="left:434px;top:714px;width:52px;height:33px;border:1px solid #ddd;background:#f4f4f4;border-radius:3px"></div><div class="a" style="left:447px;top:722px;font-size:13px;color:#333;line-height:16px">10</div><svg style="left:465px;top:727px" width="8" height="4" viewBox="0 0 8 4" fill="#333"><path d="M0 4 H8 L4 0 Z"/></svg><div class="a" style="left:490px;top:721px;font-size:14px;color:#333;line-height:16px">rows per page</div><div class="a pgi" style="left:1498px;top:712px;width:80px;height:34px;">Previous</div><div class="a pgi" style="left:1577px;top:712px;width:35px;height:34px;background:#444c69;border-color:#444c69;color:#fff;z-index:1">1</div><div class="a pgi" style="left:1611px;top:712px;width:33px;height:34px;">2</div><div class="a pgi" style="left:1643px;top:712px;width:33px;height:34px;">3</div><div class="a pgi" style="left:1675px;top:712px;width:34px;height:34px;">4</div><div class="a pgi" style="left:1708px;top:712px;width:35px;height:34px;">5</div><div class="a pgi" style="left:1742px;top:712px;width:33px;height:34px;">6</div><div class="a pgi" style="left:1774px;top:712px;width:56px;height:34px;">Next</div><div class="a" style="left:1834px;top:712px;width:50px;height:33px;border:1px solid #d2d6de;background:#fff"></div><div class="a" style="left:1889px;top:713px;width:43px;height:33px;border:1px solid #ddd;background:#f4f4f4;border-radius:3px;text-align:center;line-height:31px;font-size:13px;color:#333">Go</div><svg style="left:770px;top:145px" width="300" height="300" viewBox="-150 -150 300 300"><circle cx="0" cy="0" r="139.5" fill="none" stroke="#f00" stroke-width="5.5"/><g font-family="Liberation Sans" font-weight="bold" font-size="27.5" fill="#f00" stroke="#f00" stroke-width=".5" text-anchor="middle"><text transform="rotate(254.00) translate(0,-106.5) scale(.84,1)">w</text><text transform="rotate(267.30) translate(0,-106.5) scale(.84,1)">w</text><text transform="rotate(279.50) translate(0,-106.5) scale(.84,1)">w</text><text transform="rotate(293.00) translate(0,-106.5) scale(.84,1)">.</text><text transform="rotate(308.00) translate(0,-106.5) scale(.84,1)">h</text><text transform="rotate(321.50) translate(0,-106.5) scale(.84,1)">a</text><text transform="rotate(335.00) translate(0,-106.5) scale(.84,1)">i</text><text transform="rotate(348.70) translate(0,-106.5) scale(.84,1)">w</text><text transform="rotate(362.20) translate(0,-106.5) scale(.84,1)">a</text><text transform="rotate(374.50) translate(0,-106.5) scale(.84,1)">i</text><text transform="rotate(387.00) translate(0,-106.5) scale(.84,1)">y</text><text transform="rotate(401.00) translate(0,-106.5) scale(.84,1)">m</text><text transform="rotate(412.50) translate(0,-106.5) scale(.84,1)">.</text><text transform="rotate(428.00) translate(0,-106.5) scale(.84,1)">c</text><text transform="rotate(442.00) translate(0,-106.5) scale(.84,1)">o</text><text transform="rotate(454.50) translate(0,-106.5) scale(.84,1)">m</text></g><g font-family="Liberation Sans" font-size="15" fill="#f00" text-anchor="middle"><text transform="rotate(37.80) translate(0,131.5) scale(.85,1)">h</text><text transform="rotate(31.00) translate(0,131.5) scale(.85,1)">a</text><text transform="rotate(24.00) translate(0,131.5) scale(.85,1)">i</text><text transform="rotate(17.60) translate(0,131.5) scale(.85,1)">w</text><text transform="rotate(11.00) translate(0,131.5) scale(.85,1)">a</text><text transform="rotate(4.20) translate(0,131.5) scale(.85,1)">i</text><text transform="rotate(-2.00) translate(0,131.5) scale(.85,1)">y</text><text transform="rotate(-8.40) translate(0,131.5) scale(.85,1)">m</text><text transform="rotate(-15.00) translate(0,131.5) scale(.85,1)">.</text><text transform="rotate(-21.60) translate(0,131.5) scale(.85,1)">c</text><text transform="rotate(-28.40) translate(0,131.5) scale(.85,1)">o</text><text transform="rotate(-35.40) translate(0,131.5) scale(.85,1)">m</text></g><text x="2" y="15" text-anchor="middle" font-size="41" fill="#f00" stroke="#f00" stroke-width="1" letter-spacing="0.5">海外源码</text><text transform="translate(2,80) scale(.85,1)" text-anchor="middle" font-family="Liberation Sans" font-weight="bold" font-size="26" fill="#f00" stroke="#f00" stroke-width=".4" letter-spacing="5.6">haiwaiym.com</text></svg><div class="a" style="left:-6px;top:1147px;width:14px;height:14px;border-radius:50%;background:#1273d6"></div></body></html>
